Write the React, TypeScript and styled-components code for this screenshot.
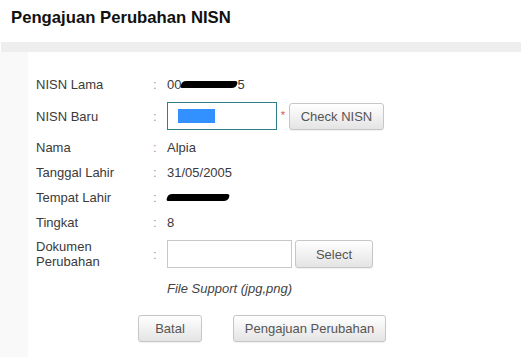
import React from "react";
import styled, { createGlobalStyle } from "styled-components";

const Global = createGlobalStyle`
  html, body { margin: 0; padding: 0; background: #fff; }
  body { font-family: "Liberation Sans", Arial, sans-serif; }
`;

const Page = styled.div`
  width: 522px;
  height: 357px;
  display: flex;
  flex-direction: column;
  overflow: hidden;
`;

const Header = styled.div`
  padding: 8px 11px 14px;
`;

const Title = styled.h1`
  margin: 0;
  font-size: 16.7px;
  line-height: 20px;
  font-weight: bold;
  color: #111;
`;

const Bar = styled.div`
  height: 10px;
  margin: 0 1px;
  background: #eeeeee;
`;

const Body = styled.div`
  flex: 1;
  display: flex;
`;

const SidePane = styled.div<{ $w: number }>`
  width: ${(p) => p.$w}px;
  background: #f9f9f9;
`;

const Content = styled.div`
  flex: 1;
  background: #fff;
  padding: 20px 0 0 8px;
  display: flex;
  flex-direction: column;
`;

const Row = styled.div<{ $h: number }>`
  display: grid;
  grid-template-columns: 117px 14px 1fr;
  align-items: center;
  height: ${(p) => p.$h}px;
  font-size: 13px;
  color: #3a3a3a;
`;

const Label = styled.div`
  line-height: 15px;
`;

const Colon = styled.div`
  color: #999;
`;

const Value = styled.div`
  display: flex;
  align-items: center;
`;

const Blob = styled.span<{ $w: number }>`
  display: inline-block;
  width: ${(p) => p.$w}px;
  height: 7px;
  background: #000;
  border-radius: 5px 3px 5px 3px;
  transform: skewX(-15deg);
`;

const FakeInput = styled.div<{ $w: number; $focus?: boolean }>`
  box-sizing: border-box;
  width: ${(p) => p.$w}px;
  height: 28px;
  border: 1px solid ${(p) => (p.$focus ? "#2d7f8c" : "#c8c8c8")};
  background: #fff;
  padding-left: 10px;
  display: flex;
  align-items: center;
`;

const Selection = styled.span`
  display: block;
  width: 37px;
  height: 14px;
  background: #3390ff;
`;

const Required = styled.span`
  color: #d9534f;
  font-size: 11px;
  width: 12px;
  text-align: center;
  align-self: flex-start;
  margin-top: 7px;
`;

const Spacer = styled.span<{ $w: number }>`
  width: ${(p) => p.$w}px;
`;

const Button = styled.button<{ $w: number; $h?: number }>`
  box-sizing: border-box;
  width: ${(p) => p.$w}px;
  height: ${(p) => p.$h ?? 27}px;
  padding: 0;
  border: 1px solid #c6c6c6;
  border-radius: 3px;
  background: linear-gradient(#ffffff, #e4e4e4);
  color: #555;
  font-family: "Liberation Sans", Arial, sans-serif;
  font-size: 13px;
  box-shadow: 0 1px 1px rgba(0, 0, 0, 0.06);
`;

const Hint = styled.div`
  font-style: italic;
  color: #444;
`;

const Actions = styled.div`
  display: flex;
  gap: 31px;
  margin: 12px 0 0 102px;
`;

export default function App() {
  return (
    <Page>
      <Global />
      <Header>
        <Title>Pengajuan Perubahan NISN</Title>
      </Header>
      <Bar />
      <Body>
        <SidePane $w={28} />
        <Content>
          <Row $h={25}>
            <Label>NISN Lama</Label>
            <Colon>:</Colon>
            <Value>
              00
              <Blob $w={56} />
              5
            </Value>
          </Row>
          <Row $h={38}>
            <Label>NISN Baru</Label>
            <Colon>:</Colon>
            <Value>
              <FakeInput $w={110} $focus>
                <Selection />
              </FakeInput>
              <Required>*</Required>
              <Button $w={95}>Check NISN</Button>
            </Value>
          </Row>
          <Row $h={25}>
            <Label>Nama</Label>
            <Colon>:</Colon>
            <Value>Alpia</Value>
          </Row>
          <Row $h={25}>
            <Label>Tanggal Lahir</Label>
            <Colon>:</Colon>
            <Value>31/05/2005</Value>
          </Row>
          <Row $h={25}>
            <Label>Tempat Lahir</Label>
            <Colon>:</Colon>
            <Value>
              <Blob $w={62} />
            </Value>
          </Row>
          <Row $h={25}>
            <Label>Tingkat</Label>
            <Colon>:</Colon>
            <Value>8</Value>
          </Row>
          <Row $h={38}>
            <Label>
              Dokumen
              <br />
              Perubahan
            </Label>
            <Colon>:</Colon>
            <Value>
              <FakeInput $w={125} />
              <Spacer $w={3} />
              <Button $w={78} $h={28}>
                Select
              </Button>
            </Value>
          </Row>
          <Row $h={30}>
            <span />
            <span />
            <Hint>File Support (jpg,png)</Hint>
          </Row>
          <Actions>
            <Button $w={64}>Batal</Button>
            <Button $w={153}>Pengajuan Perubahan</Button>
          </Actions>
        </Content>
      </Body>
    </Page>
  );
}
